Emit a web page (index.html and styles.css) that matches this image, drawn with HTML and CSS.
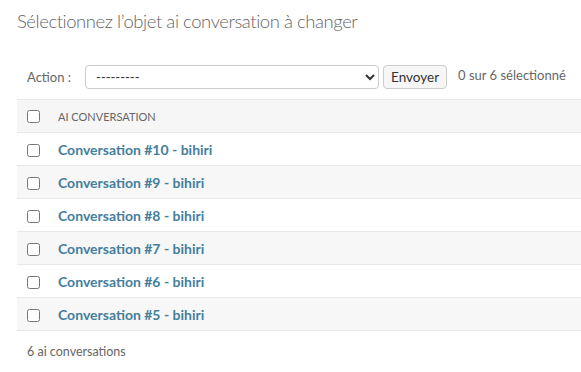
FILE: index.html
```html
<!DOCTYPE html>
<html>
  <head>
    <meta charset="utf-8">
    <title>Sélectionnez l'objet ai conversation à changer</title>
    <link rel="stylesheet" href="styles.css">
  </head>
  <body>
    <div class="content">
      <h1>Sélectionnez l’objet ai conversation à changer</h1>

      <div class="changelist">
        <div class="actions">
          <label class="action-label" for="action">Action :</label>
          <select id="action" class="action-select">
            <option>---------</option>
          </select>
          <button class="button" type="button">Envoyer</button>
          <span class="action-counter">0 sur 6 sélectionné</span>
        </div>

        <table class="result-list">
          <thead>
            <tr>
              <th class="check-col"><input type="checkbox"></th>
              <th>AI conversation</th>
            </tr>
          </thead>
          <tbody>
            <tr class="row1">
              <td class="check-col"><input type="checkbox"></td>
              <th><a href="#">Conversation #10 - bihiri</a></th>
            </tr>
            <tr class="row2">
              <td class="check-col"><input type="checkbox"></td>
              <th><a href="#">Conversation #9 - bihiri</a></th>
            </tr>
            <tr class="row1">
              <td class="check-col"><input type="checkbox"></td>
              <th><a href="#">Conversation #8 - bihiri</a></th>
            </tr>
            <tr class="row2">
              <td class="check-col"><input type="checkbox"></td>
              <th><a href="#">Conversation #7 - bihiri</a></th>
            </tr>
            <tr class="row1">
              <td class="check-col"><input type="checkbox"></td>
              <th><a href="#">Conversation #6 - bihiri</a></th>
            </tr>
            <tr class="row2">
              <td class="check-col"><input type="checkbox"></td>
              <th><a href="#">Conversation #5 - bihiri</a></th>
            </tr>
          </tbody>
        </table>

        <p class="paginator">6 ai conversations</p>
      </div>
    </div>
  </body>
</html>
```

FILE: styles.css
```css
body {
  margin: 0;
  font-family: Lato, "Open Sans", sans-serif;
  font-size: 13px;
  color: #333;
  background: #fff;
}
.content {
  padding: 0 0 0 17px;
}
h1 {
  margin: 0;
  padding-top: 9px;
  font-size: 18.5px;
  font-weight: 300;
  letter-spacing: -0.45px;
  line-height: 24px;
  color: #666;
  white-space: nowrap;
}
.actions {
  margin-top: 22px;
  padding: 10px;
  height: 24px;
  display: flex;
  align-items: flex-start;
  color: #666;
  line-height: 24px;
  white-space: nowrap;
}
.actions > * {
  flex-shrink: 0;
}
.action-label {
  margin-right: 14px;
}
.action-select {
  width: 294px;
  height: 24px;
  padding: 0 6px;
  border: 1px solid #ccc;
  border-radius: 4px;
  background: #fff;
  font-family: inherit;
  font-size: 13px;
  color: #333;
}
.button {
  margin-left: 4px;
  height: 24px;
  padding: 0 7px;
  border: 1px solid #ccc;
  border-radius: 4px;
  background: #f6f6f6;
  font-family: inherit;
  font-size: 13.5px;
  color: #333;
}
.action-counter {
  margin-left: 11px;
  line-height: 20px;
}
.result-list {
  width: 100%;
  border-collapse: collapse;
  border-bottom: 1px solid #eee;
}
.result-list th,
.result-list td {
  height: 32px;
  padding: 0 10px;
  text-align: left;
  vertical-align: middle;
  border-bottom: 1px solid #e8e8e8;
}
.result-list thead th {
  background: #f6f6f6;
  border-top: 1px solid #e8e8e8;
  font-size: 11px;
  font-weight: 400;
  text-transform: uppercase;
  color: #666;
}
.result-list tbody th {
  font-size: 14px;
  font-weight: 700;
}
.result-list .check-col {
  width: 13px;
  padding-right: 8px;
}
.check-col input {
  margin: 0;
  width: 13px;
  height: 13px;
  vertical-align: middle;
}
.row2 {
  background: #f7f7f7;
}
.result-list a {
  color: #447e9b;
  text-decoration: none;
}
.paginator {
  margin: 0;
  padding: 13px 10px;
  font-size: 12.5px;
  color: #666;
}
```
